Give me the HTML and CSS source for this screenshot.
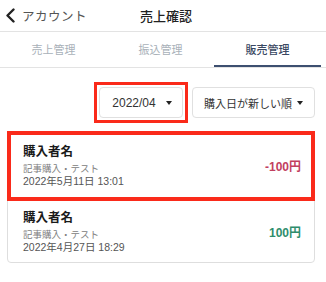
FILE: index.html
```html
<!DOCTYPE html>
<html lang="ja">
<head>
<meta charset="utf-8">
<link rel="stylesheet" href="styles.css">
</head>
<body>
<header class="nav">
  <div class="back">
    <svg class="chev" width="10" height="15" viewBox="0 0 10 15"><path d="M8.5 1.5 L2.5 7.5 L8.5 13.5" fill="none" stroke="#222" stroke-width="2.4" stroke-linecap="round" stroke-linejoin="round"/></svg>
    <span class="back-label">アカウント</span>
  </div>
  <div class="title">売上確認</div>
  <div></div>
</header>
<nav class="tabs">
  <div class="tab">売上管理</div>
  <div class="tab">振込管理</div>
  <div class="tab active">販売管理</div>
</nav>
<div class="filters">
  <div class="mark">
    <div class="select select-month">2022/04<span class="caret"></span></div>
  </div>
  <div class="select select-sort">購入日が新しい順<span class="caret"></span></div>
</div>
<div class="list">
  <div class="item marked-item">
    <div class="info">
      <div class="name">購入者名</div>
      <div class="sub">記事購入・テスト</div>
      <div class="date">2022年5月11日 13:01</div>
    </div>
    <div class="amount neg">-100円</div>
  </div>
  <div class="item">
    <div class="info">
      <div class="name">購入者名</div>
      <div class="sub">記事購入・テスト</div>
      <div class="date">2022年4月27日 18:29</div>
    </div>
    <div class="amount pos">100円</div>
  </div>
</div>
</body>
</html>
```
FILE: styles.css
```css
* { box-sizing: border-box; }
html, body { margin: 0; padding: 0; background: #fff; }
body {
  width: 326px;
  font-family: "Liberation Sans", "Noto Sans CJK JP", sans-serif;
  color: #222;
}
.nav {
  height: 32px;
  display: grid;
  grid-template-columns: 1fr auto 1fr;
  align-items: center;
  border-bottom: 1px solid #e3e3e3;
}
.back {
  display: flex;
  align-items: center;
  padding-left: 5px;
  gap: 7px;
}
.chev { display: block; }
.back-label {
  font-size: 12.5px;
  color: #555;
  letter-spacing: 0.5px;
}
.title {
  font-size: 13px;
  font-weight: 500;
  color: #222;
  padding-left: 6px;
}
.tabs {
  display: flex;
  width: 326px;
  height: 36px;
  padding-right: 5px;
  border-bottom: 1px solid #e3e3e3;
}
.tab {
  flex: 1;
  display: flex;
  align-items: center;
  justify-content: center;
  font-size: 11px;
  color: #a9b1b9;
  border-bottom: 2px solid transparent;
}
.tab.active {
  color: #3a4862;
  font-weight: 500;
  border-bottom-color: #3d4f70;
}
.filters {
  display: flex;
  justify-content: flex-end;
  gap: 9px;
  padding: 19px 11px 0 0;
}
.mark {
  display: flex;
  outline: 3px solid #fa2a1a;
  outline-offset: 2px;
}
.select {
  height: 31px;
  border: 1px solid #e0e0e0;
  border-radius: 4px;
  display: flex;
  align-items: center;
  justify-content: center;
  color: #333;
  background: #fff;
}
.select-month { width: 84px; font-size: 12px; gap: 10px; padding-left: 2px; }
.select-sort { width: 123px; font-size: 11px; gap: 5px; }
.caret {
  width: 0; height: 0;
  border-left: 3.5px solid transparent;
  border-right: 3.5px solid transparent;
  border-top: 4px solid #222;
}
.list {
  margin: 13px 11px 0 7px;
  border: 1px solid #dedede;
  border-radius: 4px;
}
.item {
  display: flex;
  align-items: center;
  justify-content: space-between;
  padding: 8px 13px 9px 15px;
}
.item + .item { border-top: 1px solid #ececec; padding-top: 8px; padding-bottom: 8px; }
.marked-item {
  outline: 4px solid #fa2a1a;
  outline-offset: -3px;
  height: 68px;
}
.name {
  font-size: 12.5px;
  font-weight: 700;
  line-height: 18px;
  color: #1a1a1a;
  margin-bottom: 2px;
}
.sub {
  font-size: 9.5px;
  line-height: 12px;
  color: #808080;
}
.date {
  font-size: 10.5px;
  line-height: 13px;
  color: #555;
}
.amount {
  font-size: 12px;
  font-weight: 700;
}
.neg { color: #c2405f; }
.pos { color: #2e8d6c; }
```
